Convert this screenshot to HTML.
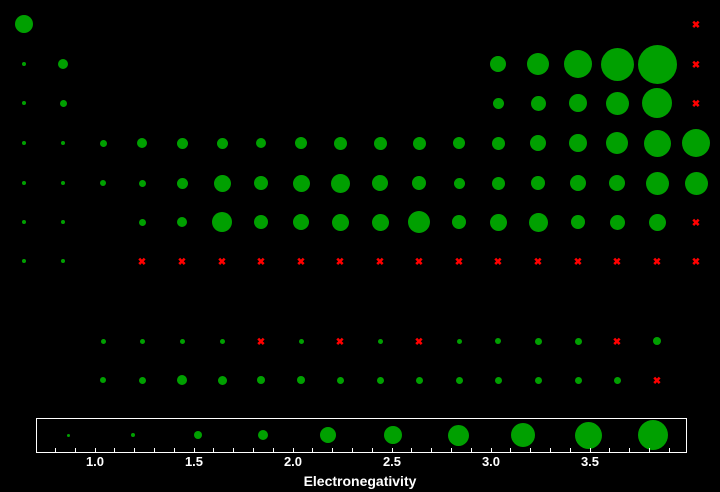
<!DOCTYPE html>
<html><head><meta charset="utf-8"><style>
body{margin:0;width:720px;height:492px;background:#000;position:relative;overflow:hidden;font-family:"Liberation Sans",sans-serif}
.c{position:absolute;border-radius:50%;background:#00a000}
.x{position:absolute;color:#f00;font-size:10px;font-weight:bold;line-height:10px;width:10px;text-align:center}
#box{position:absolute;left:36px;top:418px;width:649px;height:33px;border:1px solid #fff}
.t{position:absolute;top:448px;width:1px;height:4px;background:#fff}
.l{position:absolute;top:454px;color:#fff;font-size:13px;font-weight:bold;width:40px;text-align:center}
</style></head><body>
<div id="box"></div>
<div id="g"></div>
<div class="l" style="left:75px">1.0</div>
<div class="l" style="left:174px">1.5</div>
<div class="l" style="left:273px">2.0</div>
<div class="l" style="left:372px">2.5</div>
<div class="l" style="left:471px">3.0</div>
<div class="l" style="left:570px">3.5</div>
<div style="position:absolute;left:0;width:720px;top:473px;text-align:center;color:#fff;font-size:14px;font-weight:bold">Electronegativity</div>
<script>
const X=[24,63,103,142,182,222,261,301,340,380,419,459,498,538,578,617,657,696];
const rows=[
[24,[18,0,0,0,0,0,0,0,0,0,0,0,0,0,0,0,0,'x']],
[64,[4,10,0,0,0,0,0,0,0,0,0,0,16,22,28,33,39,'x']],
[103,[4,7,0,0,0,0,0,0,0,0,0,0,11,15,18,23,30,'x']],
[143,[4,4,7,10,11,11,10,12,13,13,13,12,13,16,18,22,27,28]],
[183,[4,4,6,7,11,17,14,17,19,16,14,11,13,14,16,16,23,23]],
[222,[4,4,0,7,10,20,14,16,17,17,22,14,17,19,14,15,17,'x']],
[261,[4,4,0,'x','x','x','x','x','x','x','x','x','x','x','x','x','x','x']],
[341,[0,0,5,5,5,5,'x',5,'x',5,'x',5,6,7,7,'x',8,0]],
[380,[0,0,6,7,10,9,8,8,7,7,7,7,7,7,7,7,'x',0]]];
let h='';
const dot=(x,y,d)=>`<div class="c" style="left:${x-d/2}px;top:${y-d/2}px;width:${d}px;height:${d}px"></div>`;
for(const [y,r] of rows)r.forEach((v,i)=>{if(v==='x')h+=`<div class="x" style="left:${X[i]-5}px;top:${y-3}px">✖</div>`;else if(v)h+=dot(X[i],y,v);});
const L=[3,4,8,10,16,18,21,24,27,30];
L.forEach((d,i)=>h+=dot(68+65*i,435,d));
for(let v=55;v<686;v+=19.8)h+=`<div class="t" style="left:${Math.round(v)}px"></div>`;
document.getElementById('g').innerHTML=h;
</script>
</body></html>
